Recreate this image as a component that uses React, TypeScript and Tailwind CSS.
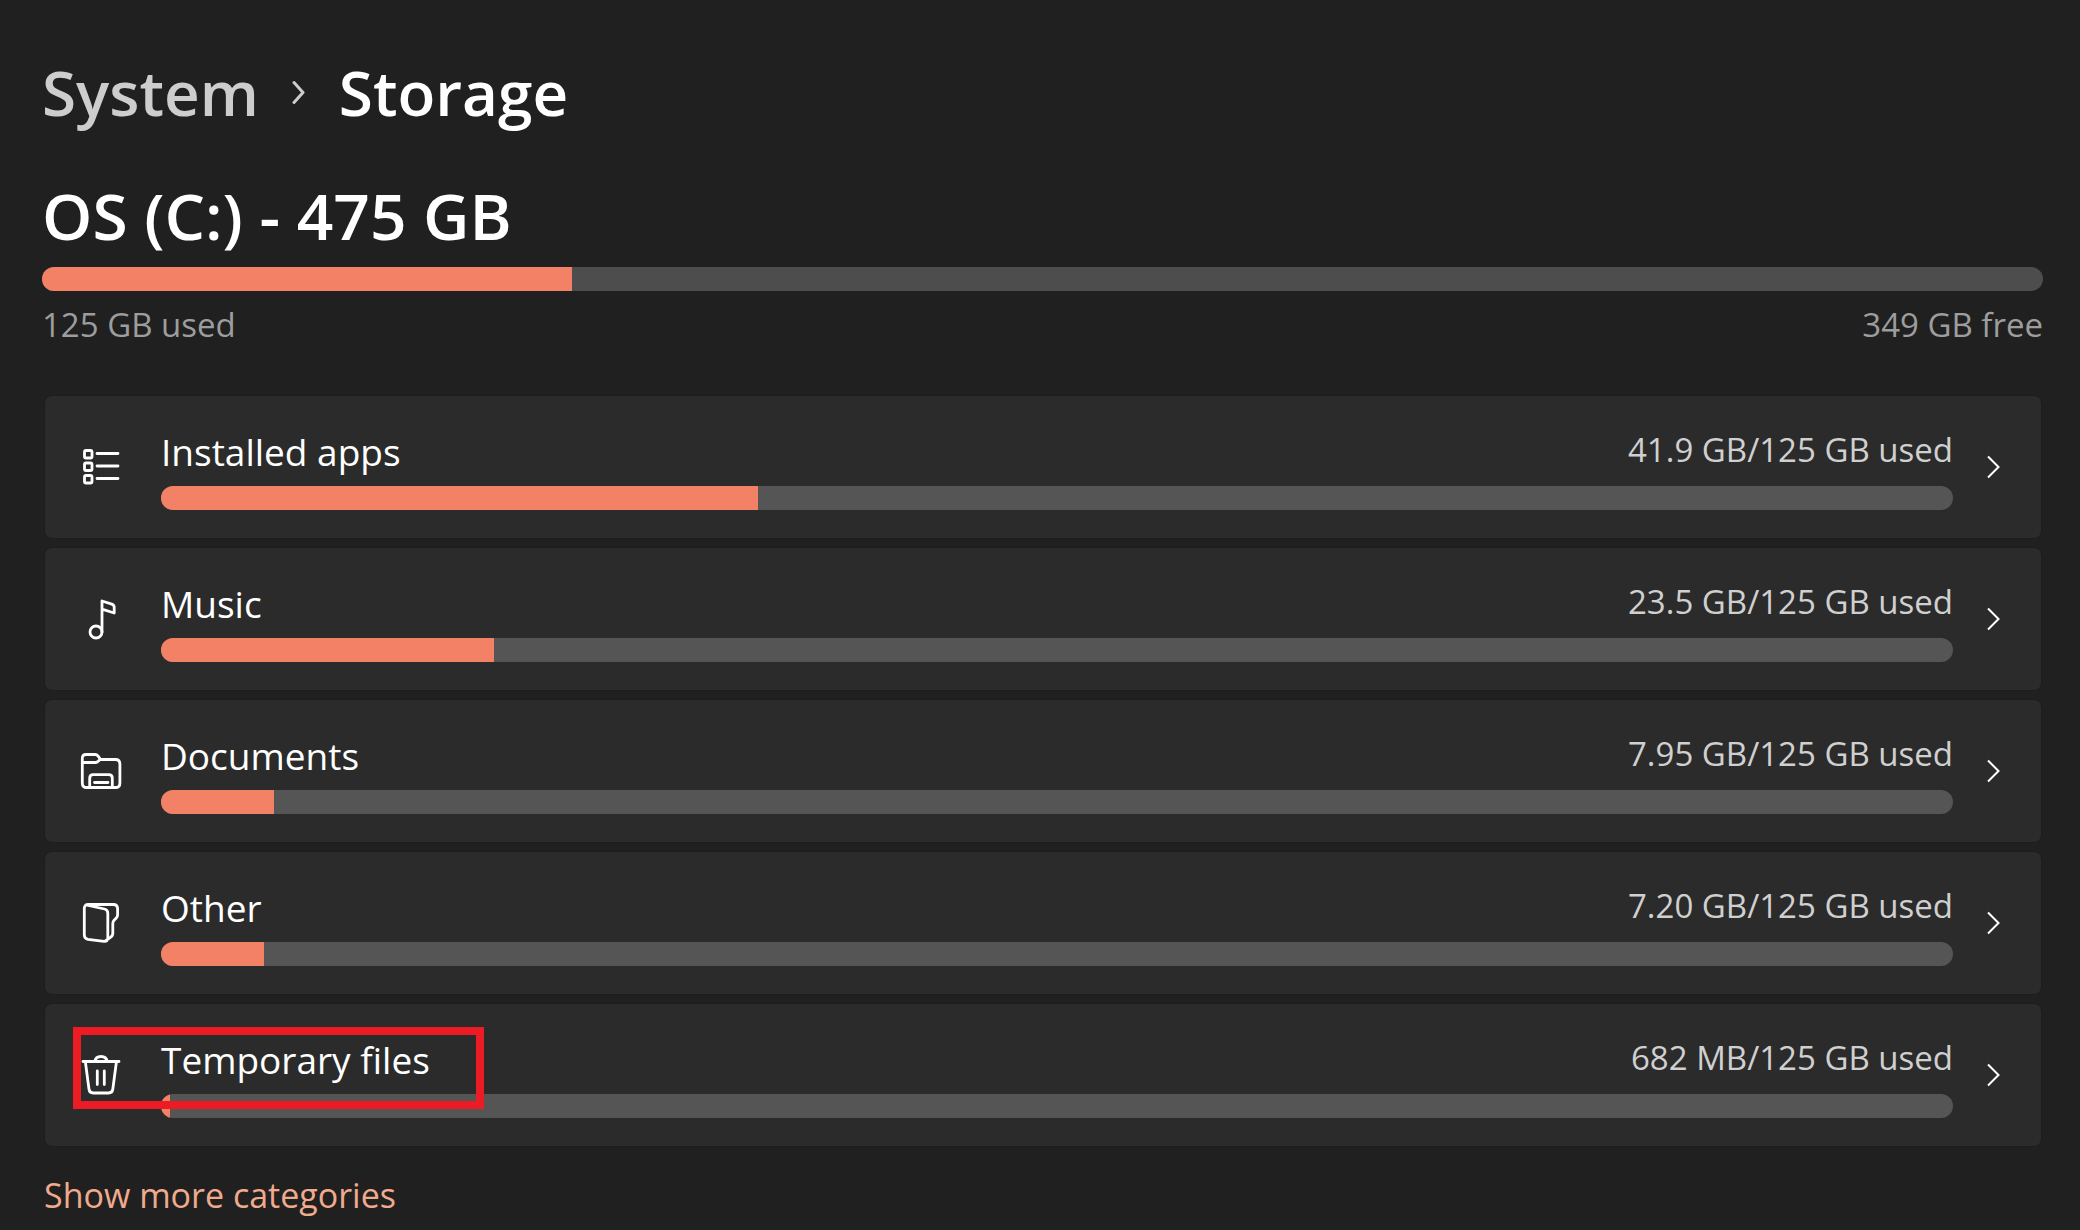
import React from 'react';

const InstalledAppsIcon = () => (
  <>
    <rect x="5.5" y="5.5" width="7.5" height="7.5" rx="1.5" />
    <rect x="5.5" y="18" width="7.5" height="7.5" rx="1.5" />
    <rect x="5.5" y="30.5" width="7.5" height="7.5" rx="1.5" />
    <path d="M18 8.5h21M18 21h21M18 33.5h21" />
  </>
);

const MusicIcon = () => (
  <>
    <circle cx="17" cy="35" r="6" />
    <path d="M23 35V4l9.8 3.1q2.4.9 2.4 3.2V16L23 12.2" />
  </>
);

const DocumentsIcon = () => (
  <>
    <path d="M3.3 13.5v-4q0-4 4-4h9q1.6 0 2.6 1.3l2.8 3.7h14.6q4.6 0 4.6 4.6v18.8q0 4.6-4.6 4.6H7.9q-4.6 0-4.6-4.6z" />
    <path d="M3.3 13.5h13.2q1.6 0 2.7-1.2l1.8-1.8" />
    <path d="M10.7 38.5v-9.3q0-3.5 3.5-3.5h15.6q3.5 0 3.5 3.5v9.3M15.5 33.5H29" />
  </>
);

const OtherIcon = () => (
  <>
    <path d="M7 4l18.5 4q3.3.8 3.3 4.2v24.6q0 4-3.8 3.5l-16-2q-3.7-.6-3.7-4.2V7.3q0-3.8 4-3.8h25q4.3 0 4.3 4.3v6q0 2-1.3 3.3l-2.2 2.2q-1.3 1.3-1.3 3.2v9.8q0 3-2.6 4.3L26 40.2" />
  </>
);

const TrashIcon = () => (
  <>
    <path d="M4 8.5h36M15.800 8.500q.8-5 6.200-5t6.200 5" />
    <path d="M6.400 9l3.600 27.300q.5 3.700 4.200 3.700h15.400q3.700 0 4.200-3.700L37.400 9" />
    <path d="M18.300 18v13.500M25.300 18v13.500" />
  </>
);

const categories = [
  { name: 'Installed apps', usage: '41.9 GB/125 GB used', percent: 33.3, icon: InstalledAppsIcon },
  { name: 'Music', usage: '23.5 GB/125 GB used', percent: 18.6, icon: MusicIcon },
  { name: 'Documents', usage: '7.95 GB/125 GB used', percent: 6.3, icon: DocumentsIcon },
  { name: 'Other', usage: '7.20 GB/125 GB used', percent: 5.75, icon: OtherIcon },
  { name: 'Temporary files', usage: '682 MB/125 GB used', percent: 0.5, icon: TrashIcon, highlighted: true },
];

const UsageBar: React.FC<{ percent: number; label: string; track: string }> = ({ percent, label, track }) => (
  <div
    role="progressbar"
    aria-label={label}
    aria-valuenow={percent}
    aria-valuemin={0}
    aria-valuemax={100}
    className={`h-6 w-full overflow-hidden rounded-full ${track}`}
  >
    <div className="h-full bg-[#f38166]" style={{ width: `${percent}%` }} />
  </div>
);

const App: React.FC = () => {
  return (
    <main className="min-h-screen bg-[#202020] pt-13 pr-[37px] pb-2 pl-[42px] font-['Open_Sans','Noto_Sans',sans-serif] text-white">
      <nav aria-label="Breadcrumb" className="flex items-center text-[62px] leading-[80px] font-semibold">
        <a href="#system" className="text-[#cdcdcd]">System</a>
        <svg viewBox="0 0 16 24" className="mx-8 h-6 w-4" fill="none" stroke="#cdcdcd" strokeWidth="3" strokeLinecap="round" strokeLinejoin="round">
          <path d="M3 2.500l9 10-9 10" />
        </svg>
        <h1>Storage</h1>
      </nav>

      <section className="mt-11">
        <h2 className="mb-[11px] text-[64px] leading-[80px] font-semibold">OS (C:) - 475 GB</h2>
        <UsageBar percent={26.5} label="OS (C:) used" track="bg-[#4d4d4d]" />
        <div className="mt-2.5 flex justify-between text-[33px] leading-[48px] text-[#9d9d9d]">
          <span>125 GB used</span>
          <span>349 GB free</span>
        </div>
      </section>

      <ul className="mr-px ml-0.5 mt-[46px] flex flex-col gap-2">
        {categories.map(({ name, usage, percent, icon: Icon, highlighted }) => (
          <li key={name} className="relative">
            <button type="button" className="flex h-36 w-full items-center rounded-lg border border-[#1d1d1d] bg-[#2b2b2b] pr-10 pl-[34px] text-left">
              <svg viewBox="0 0 44 44" className="h-11 w-11 shrink-0" fill="none" stroke="white" strokeWidth="2.8" strokeLinecap="round" strokeLinejoin="round">
                <Icon />
              </svg>
              <div className="mr-8 ml-[38px] flex-1">
                <div className="mb-1.5 flex items-start justify-between">
                  <span className="text-[37px] leading-[56px]">{name}</span>
                  <span className="text-[33px] leading-[52px] text-[#d0d0d0]">{usage}</span>
                </div>
                <UsageBar percent={percent} label={name} track="bg-[#555555]" />
              </div>
              <svg viewBox="0 0 16 24" className="h-6 w-4 shrink-0" fill="none" stroke="white" strokeWidth="2">
                <path d="M3 1.500l10.500 10.500L3 22.500" />
              </svg>
            </button>
            {highlighted && (
              <div className="pointer-events-none absolute top-6 left-[29px] h-[82px] w-[411px] border-8 border-[#ed1c24]" />
            )}
          </li>
        ))}
      </ul>

      <a href="#categories" className="mt-6 ml-0.5 inline-block text-[34px] leading-[48px] text-[#f0aa8d]">
        Show more categories
      </a>
    </main>
  );
};

export default App;
